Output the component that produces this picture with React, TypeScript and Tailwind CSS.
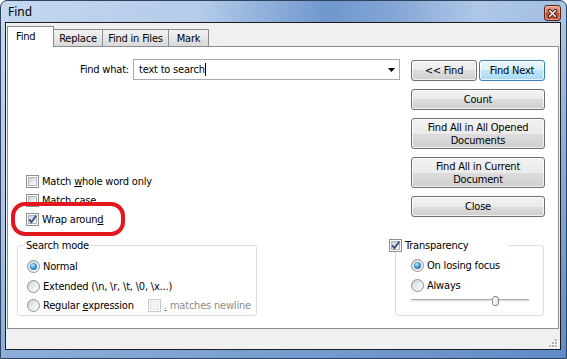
import type { ReactNode } from 'react';

const ui = "font-['DejaVu_Sans_Condensed','DejaVu_Sans',sans-serif] font-stretch-condensed text-[11px] leading-[13px] tracking-[-0.2px] text-black";

function CheckBox({ checked = false, disabled = false }: { checked?: boolean; disabled?: boolean }) {
  return (
    <span
      className={`relative flex items-center justify-center w-[13px] h-[13px] shrink-0 border bg-white ${
        disabled ? 'border-[#c9c9c9]' : 'border-[#8e8f8f]'
      }`}
    >
      <span
        className={`w-[9px] h-[9px] border ${
          disabled
            ? 'border-[#e3e3e3] bg-[#f4f4f4]'
            : 'border-[#b2b6bc] bg-[linear-gradient(135deg,#c9cdd3,#e9ecef_55%,#fbfbfb)]'
        }`}
      />
      {checked && (
        <svg className="absolute left-0 top-0" width="11" height="11" viewBox="0 0 11 11">
          <path d="M2.2 5.4L4.4 8.2L9.2 1.6" stroke="#3d4d8e" strokeWidth="1.9" fill="none" />
        </svg>
      )}
    </span>
  );
}

function Radio({ checked = false }: { checked?: boolean }) {
  return (
    <span className="flex items-center justify-center w-[13px] h-[13px] shrink-0 rounded-full border border-[#8e8f8f] bg-[linear-gradient(135deg,#cfd2d6,#eceeef_55%,#fdfdfd)]">
      {checked && (
        <span className="w-[7px] h-[7px] rounded-full bg-[radial-gradient(circle_at_40%_35%,#c4ecfd_0%,#3f9ad8_45%,#134b85_100%)]" />
      )}
    </span>
  );
}

function Btn({ children, className = '', primary = false }: { children: ReactNode; className?: string; primary?: boolean }) {
  return (
    <div
      className={`flex items-center justify-center text-center rounded-[3px] border shadow-[inset_0_0_0_1px_rgba(255,255,255,0.7)] ${
        primary
          ? 'border-[#3c7fb1] bg-[linear-gradient(#eaf6fd_0%,#d9f0fc_50%,#bee6fd_50%,#a7d9f5_100%)]'
          : 'border-[#707070] bg-[linear-gradient(#f2f2f2_0%,#ebebeb_50%,#dddddd_50%,#cfcfcf_100%)]'
      } ${className}`}
    >
      {children}
    </div>
  );
}

function Tab({ label, active = false, width }: { label: string; active?: boolean; width: string }) {
  if (active) {
    return (
      <div className={`relative z-10 -mb-px h-[21px] ${width} flex items-center pl-[8px] pb-[2px] bg-white border border-b-0 border-[#898c95]`}>
        {label}
      </div>
    );
  }
  return (
    <div className={`-ml-px h-[17px] ${width} flex items-center justify-center border border-b-0 border-[#898c95] bg-[linear-gradient(#f3f3f3,#e6e6e6_50%,#d9d9d9)]`}>
      {label}
    </div>
  );
}

export default function App() {
  return (
    <div className="relative w-[567px] h-[359px] flex flex-col pl-[4px] pr-[5px] pb-[8px] border border-[#2f435e] rounded-t-[7px] bg-[linear-gradient(160deg,#c6d9ef_0%,#a9c4e6_40%,#5f8bc6_100%)] overflow-hidden">
      {/* title bar */}
      <div className="h-[21px] flex items-start bg-[linear-gradient(90deg,rgba(198,217,239,0)_0%,rgba(170,196,230,0.4)_35%,rgba(104,145,203,0.9)_58%,rgba(120,157,208,0.8)_70%,rgba(175,199,232,0.6)_85%,rgba(150,180,222,0.4)_100%)]">
        <span className="pl-[3px] pt-[4px] font-['Noto_Sans',sans-serif] text-[12px] leading-[14px] text-black">Find</span>
        <div className="ml-auto mt-[4px] w-[17px] h-[16px] rounded-[3px] border border-[#5b2418] flex items-center justify-center bg-[linear-gradient(#e9a592_0%,#d8745c_45%,#c4452d_55%,#cf6a4c_100%)] shadow-[inset_0_0_0_1px_rgba(255,210,200,0.45)]">
          <svg width="9" height="9" viewBox="0 0 9 9">
            <path d="M1.5 1.5L7.5 7.5M7.5 1.5L1.5 7.5" stroke="#3b1a14" strokeWidth="3.2" strokeLinecap="square" />
            <path d="M1.8 1.8L7.2 7.2M7.2 1.8L1.8 7.2" stroke="#ffffff" strokeWidth="1.6" strokeLinecap="square" />
          </svg>
        </div>
      </div>

      {/* client area */}
      <div className={`flex-1 flex flex-col pt-[3px] px-px border border-[#1c1c1c] bg-[#f0f0f0] ${ui}`}>
        <div className="h-[20px] flex items-end">
          <Tab label="Find" active width="w-[47px]" />
          <Tab label="Replace" width="w-[50px]" />
          <Tab label="Find in Files" width="w-[67px]" />
          <Tab label="Mark" width="w-[41px]" />
        </div>

        <div className="h-[283px] flex flex-col bg-white border border-[#898c95]">
          {/* upper part */}
          <div className="h-[198px] flex pt-[12px]">
            <div className="w-[392px] flex flex-col">
              <div className="h-[21px] flex items-center">
                <span className="w-[125px] pr-[4px] text-right">Find what:</span>
                <div className="w-[267px] h-[21px] flex items-center pl-[5px] pr-[4px] border border-[#a5acb5] bg-white">
                  <span>text to search</span>
                  <span className="w-px h-[13px] bg-black" />
                  <svg className="ml-auto" width="7" height="4" viewBox="0 0 7 4">
                    <path d="M0 0H7L3.5 4Z" fill="#000" />
                  </svg>
                </div>
              </div>
              <div className="mt-[92px] pl-[18px] flex flex-col">
                <div className="h-[19px] flex items-center gap-[3px]">
                  <CheckBox />
                  <span>
                    Match <span className="underline">w</span>hole word only
                  </span>
                </div>
                <div className="h-[19px] flex items-center gap-[3px]">
                  <CheckBox />
                  <span>
                    Match <span className="underline">c</span>ase
                  </span>
                </div>
                <div className="h-[19px] flex items-center gap-[3px]">
                  <CheckBox checked />
                  <span>
                    Wrap aroun<span className="underline">d</span>
                  </span>
                </div>
              </div>
            </div>

            <div className="ml-[11px] mt-px w-[134px] flex flex-col gap-[8px]">
              <div className="flex gap-[2px]">
                <Btn className="w-[66px] h-[21px]">&lt;&lt; Find</Btn>
                <Btn primary className="w-[66px] h-[21px]">Find Next</Btn>
              </div>
              <Btn className="h-[21px]">Count</Btn>
              <Btn className="h-[31px]">
                Find All in All Opened
                <br />
                Documents
              </Btn>
              <Btn className="h-[31px]">
                Find All in Current
                <br />
                Document
              </Btn>
              <Btn className="h-[21px]">Close</Btn>
            </div>
          </div>

          {/* group boxes */}
          <div className="h-[71px] flex">
            <div className="relative ml-[9px] w-[240px] h-full border border-[#d5dfe5] rounded-[3px] pt-[10px] pl-[9px] flex flex-col">
              <span className="absolute left-[6px] top-[-7px] px-[2px] bg-white">Search mode</span>
              <div className="h-[20px] flex items-center gap-[3px]">
                <Radio checked />
                <span>Normal</span>
              </div>
              <div className="h-[20px] flex items-center gap-[3px]">
                <Radio />
                <span>{'Extended (\\n, \\r, \\t, \\0, \\x...)'}</span>
              </div>
              <div className="h-[19px] flex items-center">
                <div className="w-[121px] flex items-center gap-[3px]">
                  <Radio />
                  <span>
                    Regular <span className="underline">e</span>xpression
                  </span>
                </div>
                <CheckBox disabled />
                <span className="ml-[3px] text-[#8d8d8d]">
                  <span className="underline">.</span> matches newline
                </span>
              </div>
            </div>

            <div className="relative ml-[138px] w-[149px] h-full border border-[#d5dfe5] rounded-[3px] pt-[9px] pl-[15px] flex flex-col">
              <div className="absolute left-[-7px] top-[-7px] w-[119px] h-[13px] flex items-center gap-[3px] bg-white">
                <CheckBox checked />
                <span>Transparency</span>
              </div>
              <div className="h-[20px] flex items-center gap-[3px]">
                <Radio checked />
                <span>On losing focus</span>
              </div>
              <div className="h-[20px] flex items-center gap-[3px]">
                <Radio />
                <span>Always</span>
              </div>
              <div className="relative w-[118px] h-[12px]">
                <div className="absolute left-0 right-0 top-[4px] h-[3px] border-t border-[#a9a9a9] border-b border-b-[#f4f4f4] bg-[#e3e3e3]" />
                <div className="absolute left-[81px] top-[1px] w-[7px] h-[10px] rounded-[3px] border border-[#8a8a8a] bg-[linear-gradient(90deg,#ffffff,#e2e2e2)]" />
              </div>
            </div>
          </div>
        </div>

        {/* bottom strip with size grip */}
        <div className="flex-1 flex items-end justify-end pr-px pb-px">
          <svg width="9" height="9" viewBox="0 0 9 9">
            {[
              [6, 0],
              [3, 3],
              [6, 3],
              [0, 6],
              [3, 6],
              [6, 6],
            ].map(([x, y]) => (
              <g key={`${x}-${y}`}>
                <rect x={x + 1} y={y + 1} width="2" height="2" fill="#ffffff" />
                <rect x={x} y={y} width="2" height="2" fill="#b5b2ad" />
              </g>
            ))}
          </svg>
        </div>
      </div>

      {/* red annotation */}
      <div className="absolute left-[10px] top-[201px] w-[114px] h-[34px] border-[4px] border-[#e3161d] rounded-[14px]" />
    </div>
  );
}
